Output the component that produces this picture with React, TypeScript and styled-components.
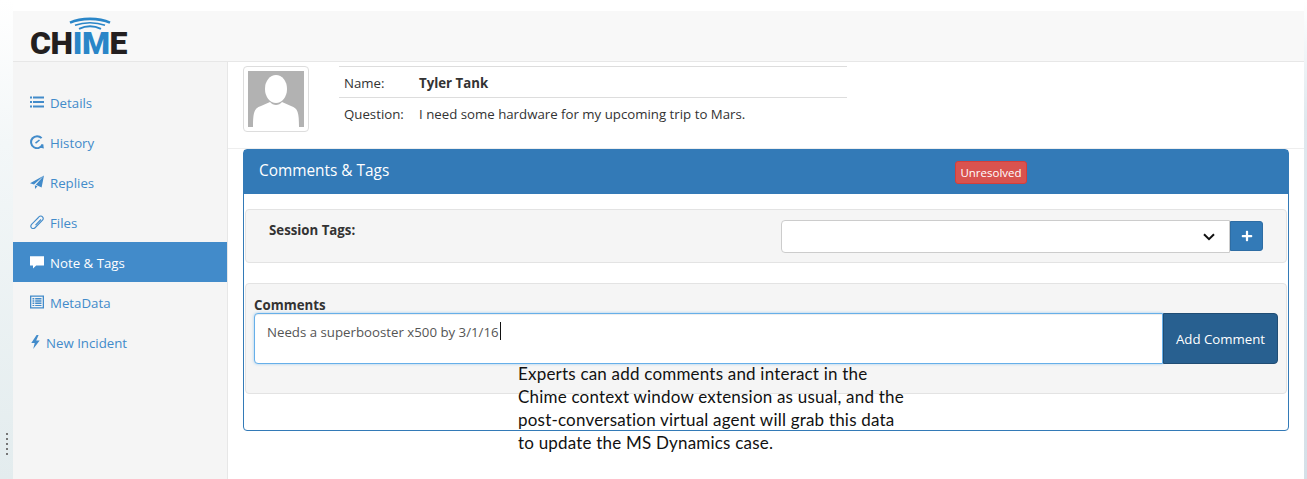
import styled, { createGlobalStyle } from "styled-components";
import { FaPlus } from "react-icons/fa";

const ListIcon = () => (
  <svg viewBox="0 0 14 14" fill="currentColor">
    <path d="M0 1.5h2v2H0zM3 1.5h11v2H3zM0 6h2v2H0zM3 6h11v2H3zM0 10.5h2v2H0zM3 10.5h11v2H3z" />
  </svg>
);

const HistoryIcon = () => (
  <svg viewBox="0 0 14 14" fill="none" stroke="currentColor">
    <path d="M11.6 3.2A6 6 0 1 0 12.6 9.5" strokeWidth="2" />
    <path d="M13.9 13.6 9.3 12.4l3.8-3.4z" fill="currentColor" stroke="none" />
    <path d="M5.5 8.2 9.5 5" strokeWidth="1.6" />
  </svg>
);

const SendIcon = () => (
  <svg viewBox="0 0 14 14" fill="currentColor">
    <path d="M14 .5 0 8.2l4 1.2zM14 .5 5.8 9.7 11.6 12.4zM4.9 10.2 5 14l2.5-2.7z" />
  </svg>
);

const ClipIcon = () => (
  <svg viewBox="0 0 14 14" fill="none" stroke="currentColor" strokeWidth="1.1">
    <path d="M3.6 7.4 8.9 1.9c1.1-1.1 2.7-1.1 3.6-.1s.9 2.5-.2 3.6L5.3 12.5c-1.2 1.2-2.9 1.2-3.8.3s-.8-2.4.3-3.6L8.4 2.7M5.5 10.2l5.5-5.7" />
  </svg>
);

const NoteIcon = () => (
  <svg viewBox="0 0 14 14" fill="currentColor">
    <path d="M0 1.2h14v9.3H6.2L3 13.4v-2.9H0z" />
  </svg>
);

const TableIcon = () => (
  <svg viewBox="0 0 14 14" fill="currentColor">
    <path fillRule="evenodd" d="M0 .5h14v13H0zM1.3 1.8v10.4h11.4V1.8z" />
    <path d="M2.5 3h1.8v1.4H2.5zM5.2 3h6.3v1.4H5.2zM2.5 5.3h1.8v1.4H2.5zM5.2 5.3h6.3v1.4H5.2zM2.5 7.6h1.8V9H2.5zM5.2 7.6h6.3V9H5.2zM2.5 9.9h1.8v1.2H2.5zM5.2 9.9h6.3v1.2H5.2z" />
  </svg>
);

const BoltIcon = () => (
  <svg viewBox="0 0 14 14" fill="currentColor">
    <path d="M6.6 0 1.3 8h3.4L3.2 14l6.5-8.6H6.2L8.6 0z" />
  </svg>
);

const NAV_ITEMS = [
  { label: "Details", icon: <ListIcon /> },
  { label: "History", icon: <HistoryIcon /> },
  { label: "Replies", icon: <SendIcon /> },
  { label: "Files", icon: <ClipIcon /> },
  { label: "Note & Tags", icon: <NoteIcon />, active: true },
  { label: "MetaData", icon: <TableIcon /> },
  { label: "New Incident", icon: <BoltIcon />, compact: true },
];

const App = () => {
  return (
    <>
      <GlobalStyle />
      <Page>
        <LeftStrip>
          <Grip>
            <i />
            <i />
            <i />
            <i />
            <i />
          </Grip>
        </LeftStrip>
        <Shell>
          <Header>
            <Logo>
              <LogoWaves viewBox="0 0 42 14" aria-hidden="true">
                <path d="M1 5.6C12 .6 30 .6 41 5.6" strokeWidth="2.6" />
                <path d="M6 8.3C15 4.8 27 4.8 36 8.3" strokeWidth="1.5" />
                <path d="M10 11.8C17 8.6 25 8.6 32 11.8" strokeWidth="2" />
              </LogoWaves>
              <LogoText>
                CH<em>IM</em>E
              </LogoText>
            </Logo>
          </Header>
          <Body>
            <Sidebar>
              {NAV_ITEMS.map(({ label, icon, active, compact }) => (
                <NavItem key={label} $active={active}>
                  <NavIcon $compact={compact}>{icon}</NavIcon>
                  {label}
                </NavItem>
              ))}
            </Sidebar>
            <Main>
              <Profile>
                <Avatar>
                  <svg viewBox="0 0 56 56" aria-hidden="true">
                    <rect width="56" height="56" fill="#b2b2b2" />
                    <ellipse cx="28" cy="18" rx="11" ry="14" fill="#fff" />
                    <path
                      d="M5 56C5 42 6 37 13 35l9-4c3 4 9 4 12 0l9 4c7 2 8 7 8 21z"
                      fill="#fff"
                    />
                  </svg>
                </Avatar>
                <InfoTable>
                  <InfoRow>
                    <InfoLabel>Name:</InfoLabel>
                    <InfoName>Tyler Tank</InfoName>
                  </InfoRow>
                  <InfoRow>
                    <InfoLabel>Question:</InfoLabel>
                    <span>I need some hardware for my upcoming trip to Mars.</span>
                  </InfoRow>
                </InfoTable>
              </Profile>
              <Panel>
                <PanelHeading>
                  <PanelTitle>Comments &amp; Tags</PanelTitle>
                  <StatusLabel>Unresolved</StatusLabel>
                </PanelHeading>
                <PanelBody>
                  <TagsWell>
                    <TagsLabel>Session Tags:</TagsLabel>
                    <TagsControl>
                      <SelectWrap>
                        <TagSelect>
                          <option></option>
                        </TagSelect>
                        <SelectArrow viewBox="0 0 12 8" aria-hidden="true">
                          <path d="M1 1.2 6 6.2l5-5" />
                        </SelectArrow>
                      </SelectWrap>
                      <PlusButton type="button">
                        <FaPlus />
                      </PlusButton>
                    </TagsControl>
                  </TagsWell>
                  <CommentsWell>
                    <CommentsLabel>Comments</CommentsLabel>
                    <CommentGroup>
                      <CommentInput>
                        Needs a superbooster x500 by 3/1/16
                        <Caret />
                      </CommentInput>
                      <AddButton type="button">Add Comment</AddButton>
                    </CommentGroup>
                  </CommentsWell>
                </PanelBody>
              </Panel>
              <Annotation>
                Experts can add comments and interact in the
                <br />
                Chime context window extension as usual, and the
                <br />
                post-conversation virtual agent will grab this data
                <br />
                to update the MS Dynamics case.
              </Annotation>
            </Main>
          </Body>
        </Shell>
        <RightStrip />
      </Page>
    </>
  );
};

export default App;

const GlobalStyle = createGlobalStyle`
  * {
    box-sizing: border-box;
  }

  body {
    margin: 0;
    background: #fff;
    font-family: "Open Sans", "Liberation Sans", sans-serif;
    font-size: 13.25px;
    color: #333;
  }
`;

const Page = styled.div`
  width: 1307px;
  height: 479px;
  display: flex;
  overflow: hidden;
`;

const LeftStrip = styled.div`
  width: 13px;
  flex: none;
  display: flex;
  flex-direction: column;
  justify-content: flex-end;
  align-items: center;
  padding: 0 0 24px 1px;
  background: linear-gradient(180deg, #ffffff 0%, #f3f7f8 30%, #e3ecee 100%);
`;

const Grip = styled.div`
  display: flex;
  flex-direction: column;
  gap: 3px;

  i {
    display: block;
    width: 2px;
    height: 2px;
    background: #777;
  }
`;

const RightStrip = styled.div`
  width: 3px;
  flex: none;
  background: linear-gradient(180deg, #ffffff 0%, #dfe8ee 25%, #d5e0e8 100%);
`;

const Shell = styled.div`
  flex: 1;
  min-width: 0;
  display: flex;
  flex-direction: column;
  padding-top: 11px;
`;

const Header = styled.header`
  height: 51px;
  flex: none;
  padding-left: 17px;
  background: #f8f8f8;
  border-bottom: 1px solid #e7e7e7;
`;

const Logo = styled.div`
  width: 97px;
  display: flex;
  flex-direction: column;
  align-items: center;
  padding-top: 6px;
`;

const LogoWaves = styled.svg`
  width: 42px;
  height: 14px;
  margin-left: 23px;
  fill: none;
  stroke: #2a86c8;
`;

const LogoText = styled.div`
  font-family: "Roboto", "Liberation Sans", sans-serif;
  font-weight: 900;
  font-size: 32px;
  line-height: 25px;
  letter-spacing: -0.4px;
  color: #231f20;

  em {
    font-style: normal;
    color: #2a86c8;
  }
`;

const Body = styled.div`
  flex: 1;
  min-height: 0;
  display: flex;
`;

const Sidebar = styled.nav`
  width: 215px;
  flex: none;
  padding-top: 20px;
  background: #f5f5f5;
  border-right: 1px solid #e7e7e7;
`;

const NavItem = styled.div<{ $active?: boolean }>`
  height: 40px;
  display: flex;
  align-items: center;
  padding: 2px 0 0 17px;
  color: ${(p) => (p.$active ? "#fff" : "#428bca")};
  background: ${(p) => (p.$active ? "#428bca" : "transparent")};
`;

const NavIcon = styled.span<{ $compact?: boolean }>`
  width: ${(p) => (p.$compact ? "16px" : "20px")};
  height: 14px;
  flex: none;
  margin-top: -3px;

  svg {
    display: block;
    width: 14px;
    height: 14px;
  }
`;

const Main = styled.main`
  flex: 1;
  min-width: 0;
  position: relative;
`;

const Profile = styled.section`
  height: 87px;
  display: flex;
  padding: 4px 0 0 15px;
  border-bottom: 1px solid #eee;
`;

const Avatar = styled.div`
  width: 66px;
  height: 66px;
  flex: none;
  padding: 4px;
  background: #fff;
  border: 1px solid #ddd;
  border-radius: 4px;

  svg {
    display: block;
    width: 100%;
    height: 100%;
  }
`;

const InfoTable = styled.div`
  width: 508px;
  margin-left: 30px;
`;

const InfoRow = styled.div`
  height: 31px;
  display: flex;
  align-items: center;
  padding: 1px 0 0 5px;
  border-top: 1px solid #ddd;
`;

const InfoLabel = styled.span`
  width: 75px;
  flex: none;
`;

const InfoName = styled.span`
  font-weight: 700;
`;

const Panel = styled.section`
  width: 1046px;
  height: 282px;
  margin-left: 15px;
  border: 1px solid #337ab7;
  border-radius: 4px;
  background: #fff;
`;

const PanelHeading = styled.div`
  height: 44px;
  display: flex;
  align-items: center;
  padding: 0 15px;
  background: #337ab7;
  color: #fff;
`;

const PanelTitle = styled.h3`
  width: 696px;
  margin: 0 0 4px;
  font-size: 15.4px;
  font-weight: 400;
`;

const StatusLabel = styled.span`
  width: 72px;
  height: 23px;
  display: flex;
  align-items: center;
  justify-content: center;
  font-size: 11.5px;
  background: #d9534f;
  border: 1px solid #d43f3a;
  border-radius: 3px;
`;

const PanelBody = styled.div`
  display: flex;
  flex-direction: column;
  gap: 20px;
  padding: 15px 1px 0;
`;

const TagsWell = styled.div`
  height: 54px;
  display: flex;
  justify-content: space-between;
  padding: 10px 23px 0 23px;
  background: #f5f5f5;
  border: 1px solid #e3e3e3;
  border-radius: 4px;
`;

const TagsLabel = styled.label`
  font-weight: 700;
  line-height: 20px;
`;

const TagsControl = styled.div`
  display: flex;
  align-items: flex-start;
`;

const SelectWrap = styled.div`
  position: relative;
  width: 449px;
  height: 33px;
`;

const TagSelect = styled.select`
  width: 100%;
  height: 100%;
  appearance: none;
  background: #fff;
  border: 1px solid #ccc;
  border-radius: 4px 0 0 4px;
`;

const SelectArrow = styled.svg`
  position: absolute;
  right: 15px;
  top: 13px;
  width: 12px;
  height: 8px;
  fill: none;
  stroke: #111;
  stroke-width: 2;
`;

const PlusButton = styled.button`
  width: 33px;
  height: 30px;
  margin-top: 1px;
  display: flex;
  align-items: center;
  justify-content: center;
  color: #fff;
  font-size: 12px;
  background: #337ab7;
  border: 1px solid #2e6da4;
  border-radius: 0 3px 3px 0;
`;

const CommentsWell = styled.div`
  height: 111px;
  padding: 13px 8px 0 8px;
  background: #f5f5f5;
  border: 1px solid #e3e3e3;
  border-radius: 4px;
`;

const CommentsLabel = styled.label`
  display: block;
  height: 16px;
  font-weight: 700;
  line-height: 16px;
`;

const CommentGroup = styled.div`
  height: 51px;
  display: flex;
`;

const CommentInput = styled.div`
  flex: 1;
  padding: 6px 12px;
  line-height: 24px;
  color: #555;
  background: #fff;
  border: 1px solid #66afe9;
  border-radius: 4px 0 0 4px;
  box-shadow: inset 0 1px 1px rgba(0, 0, 0, 0.075), 0 0 3px rgba(102, 175, 233, 0.6);
`;

const Caret = styled.span`
  display: inline-block;
  width: 1px;
  height: 18px;
  margin-left: 1px;
  vertical-align: -3px;
  background: #111;
`;

const AddButton = styled.button`
  width: 115px;
  flex: none;
  padding: 1px 0 0;
  color: #fff;
  font: inherit;
  background: #286090;
  border: 1px solid #204d74;
  border-radius: 0 4px 4px 0;
`;

const Annotation = styled.p`
  position: absolute;
  left: 290px;
  top: 300px;
  margin: 0;
  font-family: "Lato", "Open Sans", sans-serif;
  font-size: 17px;
  letter-spacing: 0.2px;
  line-height: 23px;
  color: #111;
  white-space: nowrap;
`;
